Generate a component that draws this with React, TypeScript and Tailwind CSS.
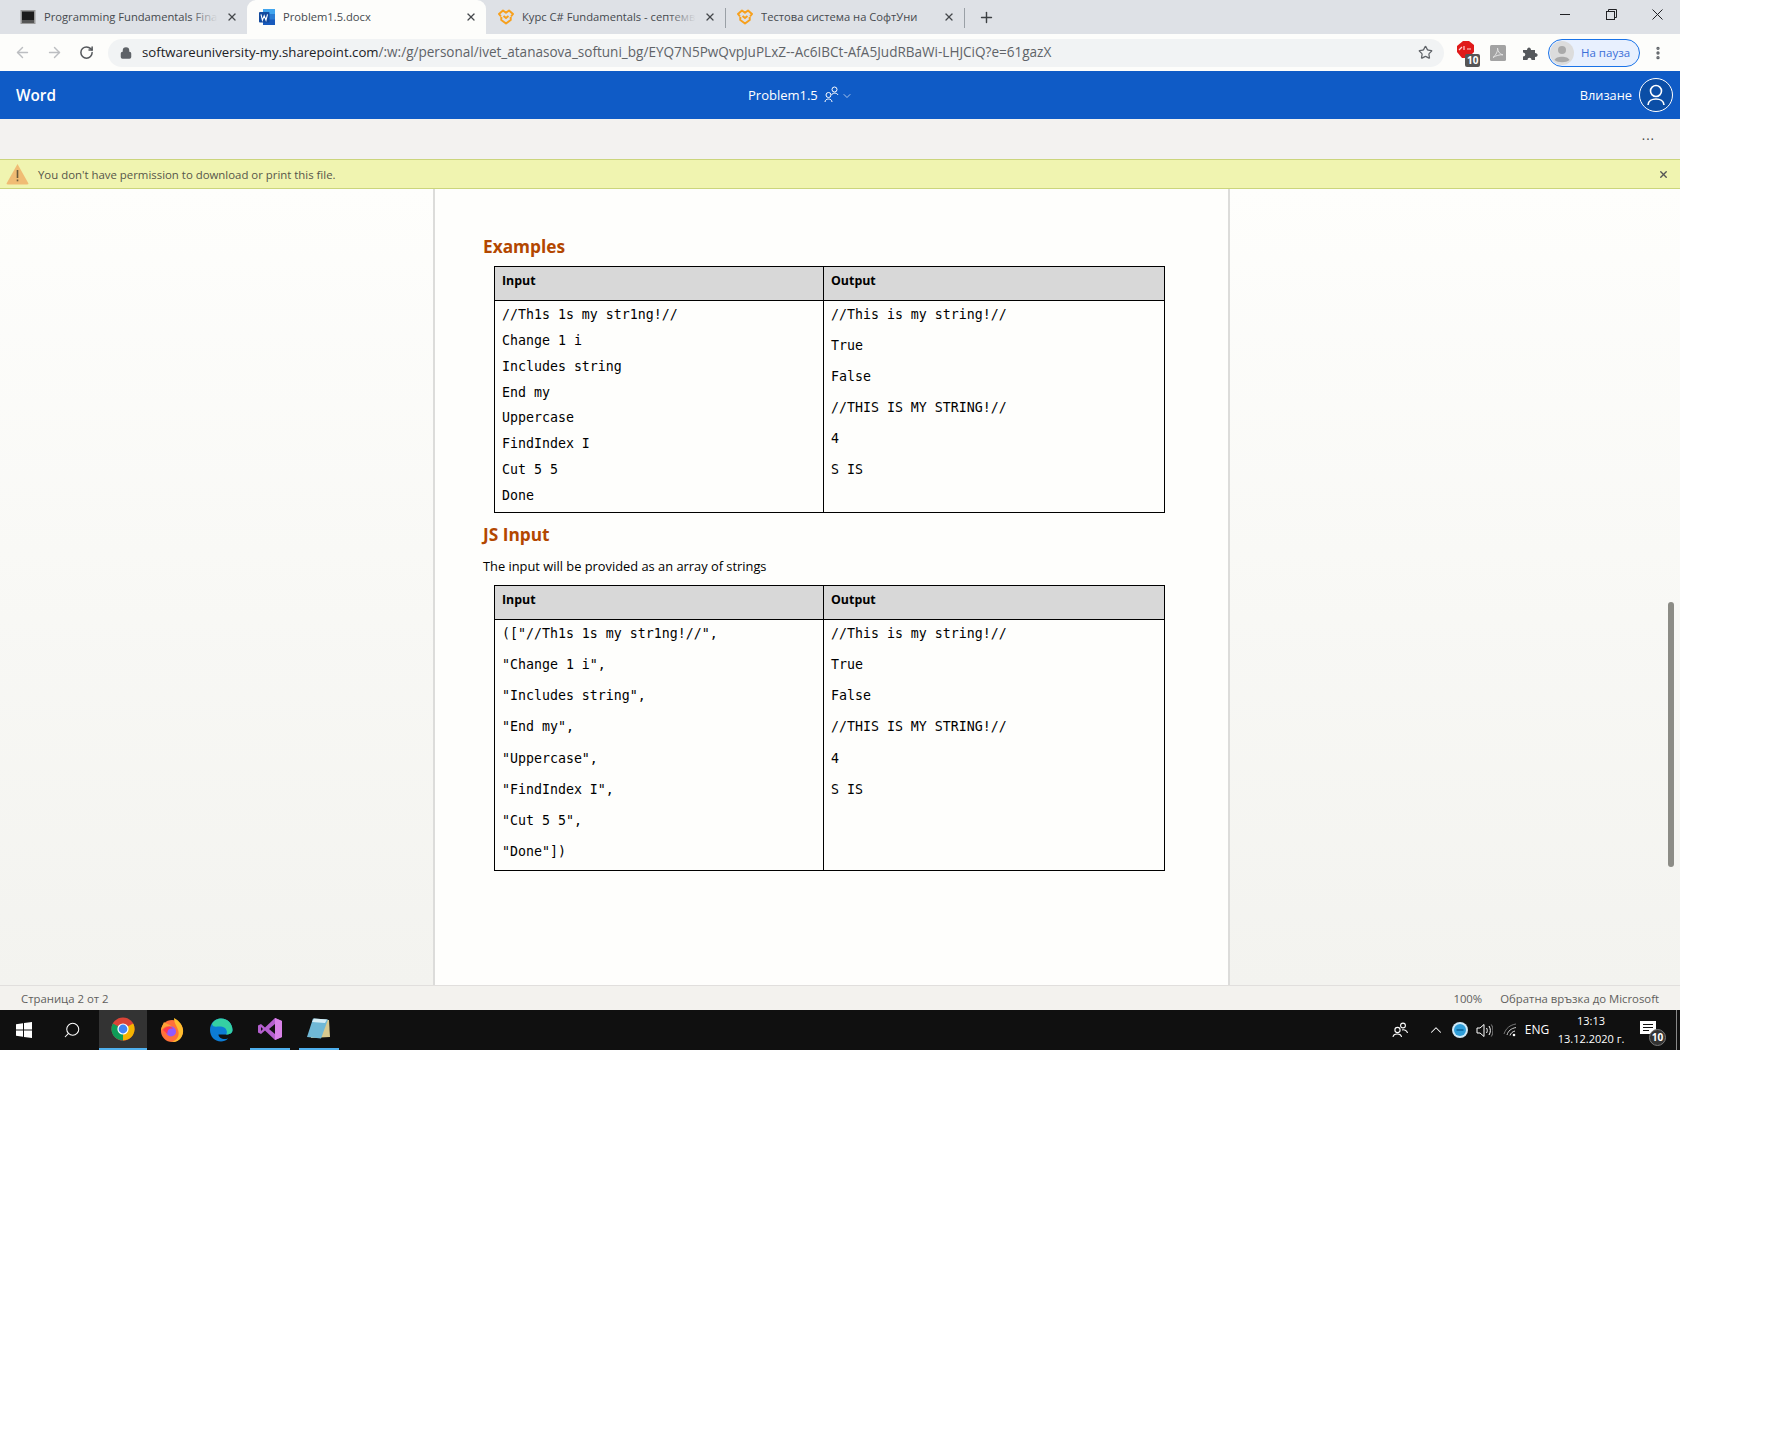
import { ReactNode } from 'react'
import { ArrowLeft, ArrowRight, ChevronDown, ChevronUp, Lock, MoreVertical, Plus, RotateCw, Search, Star, X } from 'lucide-react'

const inputOne = ['//Th1s 1s my str1ng!//', 'Change 1 i', 'Includes string', 'End my', 'Uppercase', 'FindIndex I', 'Cut 5 5', 'Done']
const inputTwo = ['(["//Th1s 1s my str1ng!//",', '"Change 1 i",', '"Includes string",', '"End my",', '"Uppercase",', '"FindIndex I",', '"Cut 5 5",', '"Done"])']
const output = ['//This is my string!//', 'True', 'False', '//THIS IS MY STRING!//', '4', 'S IS']

function SoftUni() {
  return (
    <svg width="16" height="16" viewBox="0 0 16 16" fill="none" stroke="#f7a01d" strokeWidth="2" className="shrink-0">
      <path d="M3 7.5 L1 5 L5 1.5 L8 3.8 L11 1.5 L15 5 L13 7.5" strokeLinejoin="round" />
      <path d="M3.3 8 V11 L8 14.5 L12.7 11 V8" strokeLinejoin="round" />
      <path d="M5.5 7 L8 9 L10.5 7" />
    </svg>
  )
}

function WordIcon() {
  return (
    <svg width="16" height="16" viewBox="0 0 16 16" className="shrink-0">
      <rect x="4" y="0" width="12" height="16" rx="1" fill="#2b7cd3" />
      <rect x="4" y="0" width="12" height="5" fill="#41a5ee" />
      <rect x="4" y="10.5" width="12" height="5.5" fill="#185abd" />
      <rect x="0" y="3" width="10.5" height="10.5" rx="1" fill="#134a9e" />
      <path d="M2 5.3 L3.4 11.2 L5.2 6.8 L7 11.2 L8.5 5.3" stroke="#fff" strokeWidth="1.1" fill="none" />
    </svg>
  )
}

function Tab({ title, icon, width, fade, active, divider }: { title: string; icon: ReactNode; width: string; fade?: boolean; active?: boolean; divider?: boolean }) {
  return (
    <div className={`relative flex h-[34px] shrink-0 items-center pl-3 ${width} ${active ? 'rounded-t-[9px] bg-[#fdfdfb]' : ''}`}>
      {icon}
      <div className="relative ml-2 w-[174px] overflow-hidden whitespace-nowrap text-[11.2px] text-[#45494e]">
        {title}
        {fade && <div className="absolute inset-y-0 right-0 w-7 bg-gradient-to-r from-transparent to-[#dee1e6]" />}
      </div>
      <X size={12} strokeWidth={2.6} className="ml-2 shrink-0 text-[#45484c]" />
      {divider && <div className="absolute right-[-1px] top-[8px] h-[20px] w-px bg-[#9aa0a6]" />}
    </div>
  )
}

function Favicon() {
  return (
    <svg width="16" height="16" viewBox="0 0 16 16" className="shrink-0">
      <rect x="0.5" y="1" width="15" height="14" fill="#9a9a9a" />
      <rect x="2" y="2.5" width="12" height="11" fill="#1c1c1c" />
      <rect x="2" y="11" width="12" height="2.5" fill="#555" />
    </svg>
  )
}

function ChromeBar() {
  return (
    <div className="flex h-[37px] items-center bg-[#fdfdfb]">
      <div className="ml-[6px] flex w-8 justify-center"><ArrowLeft size={17} strokeWidth={2} className="text-[#bcbec1]" /></div>
      <div className="flex w-8 justify-center"><ArrowRight size={17} strokeWidth={2} className="text-[#bcbec1]" /></div>
      <div className="flex w-8 justify-center"><RotateCw size={15} strokeWidth={2.4} className="text-[#55585c]" /></div>
      <div className="ml-[6px] flex h-[28px] w-[1336px] items-center rounded-full bg-[#f1f3f4] pl-3 pr-[11px]">
        <Lock size={12} strokeWidth={3} fill="#5f6368" className="text-[#5f6368]" />
        <div className="ml-[10px] flex-1 whitespace-nowrap pb-[3px] leading-[18px]">
          <span className="text-[13.2px] text-[#202124]">softwareuniversity-my.sharepoint.com</span>
          <span className="text-[13.55px] text-[#5f6368]">/:w:/g/personal/ivet_atanasova_softuni_bg/EYQ7N5PwQvpJuPLxZ--Ac6IBCt-AfA5JudRBaWi-LHJCiQ?e=61gazX</span>
        </div>
        <Star size={15} strokeWidth={2} className="text-[#5f6368]" />
      </div>
      <div className="relative ml-[6px] flex h-[28px] w-8 items-center justify-center">
        <svg width="17" height="17" viewBox="0 0 17 17" className="-translate-x-[1px] -translate-y-[3px]">
          <path d="M6 0 H12 L17 4 V11 L11 17 H5 L0 11 V5 Z" fill="#e01a1a" />
          <path d="M2 9 L5 6 M7 9 V5 M10 8 H14" stroke="#ffd6d6" strokeWidth="1.2" />
        </svg>
        <span className="absolute bottom-0 left-[15px] rounded-[2px] bg-[#555] px-[2px] text-[10px] font-bold leading-[13px] text-white">10</span>
      </div>
      <div className="flex w-8 justify-center">
        <svg width="16" height="16" viewBox="0 0 16 16"><rect width="16" height="16" rx="1.5" fill="#a3a3a3" /><path d="M3 12.5 C6 10 8 6 7.5 3 C8 7 10 9.5 13 9.8 C9.5 9.6 6 10.5 3 12.5 Z" fill="none" stroke="#e4e4e4" strokeWidth="1" /></svg>
      </div>
      <div className="flex w-8 justify-center">
        <svg width="16" height="16" viewBox="0 0 16 16"><path d="M1 5 H5 C5 1.5 9 1.5 9 5 H13 V8 C16.5 8 16.5 12 13 12 V15 H9.5 C9.5 12 5.5 12 5.5 15 H1 V11.5 C4 11.5 4 7.5 1 7.5 Z" fill="#55585c" /></svg>
      </div>
      <div className="ml-[2px] flex h-[28px] w-[92px] items-center rounded-full border border-[#1a73e8] bg-[#e8f0fe] pl-[1px]">
        <svg width="24" height="24" viewBox="0 0 24 24" className="shrink-0"><circle cx="12" cy="12" r="12" fill="#dcdcdc" /><circle cx="12" cy="9" r="4" fill="#a9a9a9" /><path d="M4.5 19 C6 14.5 18 14.5 19.5 19 C16 22 8 22 4.5 19 Z" fill="#a9a9a9" /></svg>
        <span className="ml-[7px] whitespace-nowrap text-[11.5px] text-[#3b6fd8]">На пауза</span>
      </div>
      <div className="ml-[2px] flex w-8 justify-center"><MoreVertical size={16} strokeWidth={3} className="text-[#5f6368]" /></div>
    </div>
  )
}

function TabStrip() {
  return (
    <div className="flex h-[34px] items-center bg-[#dee1e6] pl-2">
      <Tab title="Programming Fundamentals Final" icon={<Favicon />} width="w-[239px]" fade />
      <Tab title="Problem1.5.docx" icon={<WordIcon />} width="w-[239px]" active />
      <Tab title="Курс C# Fundamentals - септември" icon={<SoftUni />} width="w-[239px]" fade divider />
      <Tab title="Тестова система на СофтУни" icon={<SoftUni />} width="w-[239px]" divider />
      <Plus size={17} strokeWidth={2} className="ml-[14px] text-[#3c4043]" />
      <div className="ml-auto flex items-center pb-[6px] text-[#202124]">
        <div className="flex w-[46px] justify-center"><div className="h-px w-[10px] bg-[#202124]" /></div>
        <div className="flex w-[46px] justify-center">
          <svg width="11" height="11" viewBox="0 0 11 11" fill="none" stroke="#202124"><rect x="0.5" y="2.5" width="8" height="8" /><path d="M2.5 2.5 V0.5 H10.5 V8.5 H8.5" /></svg>
        </div>
        <div className="flex w-[46px] justify-center"><svg width="11" height="11" viewBox="0 0 11 11" stroke="#202124"><path d="M0.5 0.5 L10.5 10.5 M10.5 0.5 L0.5 10.5" /></svg></div>
      </div>
    </div>
  )
}

function ExampleTable({ input, inputLeading, outputLeading, inputShift, outputShift, bodyHeight }: { input: string[]; inputLeading: string; outputLeading: string; inputShift: string; outputShift: string; bodyHeight: string }) {
  return (
    <table className="ml-[11px] w-[671px] table-fixed border-collapse border border-black text-left text-black">
      <colgroup>
        <col className="w-[329px]" />
        <col />
      </colgroup>
      <thead>
        <tr className="h-[34px] bg-[#d8d8d8] text-[12.4px] font-bold">
          <th className="border border-black px-[7px] pb-[4px] pt-[5px] align-top leading-[18px]">Input</th>
          <th className="border border-black px-[7px] pb-[4px] pt-[5px] align-top leading-[18px]">Output</th>
        </tr>
      </thead>
      <tbody className="font-['DejaVu_Sans_Mono',monospace] text-[13.28px]">
        <tr className={bodyHeight}>
          <td className="border border-black px-[7px] align-top">
            <div className={`${inputShift} ${inputLeading}`}>
              {input.map((line) => <div key={line} className="whitespace-pre">{line}</div>)}
            </div>
          </td>
          <td className="border border-black px-[7px] align-top">
            <div className={`${outputShift} ${outputLeading}`}>
              {output.map((line) => <div key={line} className="whitespace-pre">{line}</div>)}
            </div>
          </td>
        </tr>
      </tbody>
    </table>
  )
}

function Document() {
  return (
    <div className="h-full w-[797px] shrink-0 border-x-2 border-[#dcdcda] bg-[#fefefc] pl-[48px] pt-[46px]">
      <h2 className="h-6 text-[17.3px] font-bold leading-[23px] text-[#b34700]">Examples</h2>
      <div className="mt-[7px]">
        <ExampleTable input={inputOne} inputLeading="leading-[25.85px]" outputLeading="leading-[31px]" inputShift="pt-px" outputShift="-mt-[2px]" bodyHeight="h-[212px]" />
      </div>
      <h2 className="mt-[10px] h-6 text-[17.3px] font-bold leading-6 text-[#b34700]">JS Input</h2>
      <p className="mt-[9px] h-5 text-[12.85px] leading-5 text-black">The input will be provided as an array of strings</p>
      <div className="mt-[9px]">
        <ExampleTable input={inputTwo} inputLeading="leading-[31.15px]" outputLeading="leading-[31.15px]" inputShift="-mt-[2px]" outputShift="-mt-[2px]" bodyHeight="h-[251px]" />
      </div>
    </div>
  )
}

function Taskbar() {
  return (
    <div className="flex h-10 items-center bg-[#101010]">
      <div className="flex h-full w-12 items-center justify-center">
        <svg width="16" height="16" viewBox="0 0 16 16" fill="#fff"><path d="M0 2.3 L7 1.3 V7.5 H0 Z M8 1.1 L16 0 V7.5 H8 Z M0 8.5 H7 V14.7 L0 13.7 Z M8 8.5 H16 V16 L8 14.9 Z" /></svg>
      </div>
      <div className="flex h-full w-[51px] items-center justify-center pr-[4px]"><Search size={18} strokeWidth={1.4} className="-scale-x-100 text-white" /></div>
      <div className="flex h-full w-12 items-center justify-center border-b-2 border-[#4fb0ee] bg-[#333]">
        <svg width="24" height="24" viewBox="0 0 24 24">
          <circle cx="12" cy="12" r="11.5" fill="#db4437" />
          <path d="M12 12 L22.2 6.5 A11.5 11.5 0 0 1 12 23.5 Z" fill="#f4b400" />
          <path d="M12 12 L12 23.5 A11.5 11.5 0 0 1 1.8 6.5 Z" fill="#0f9d58" />
          <circle cx="12" cy="12" r="5.6" fill="#fff" />
          <circle cx="12" cy="12" r="4.4" fill="#4285f4" />
        </svg>
      </div>
      <div className="flex h-full w-[49px] items-center justify-center">
        <svg width="24" height="24" viewBox="0 0 24 24">
          <circle cx="12" cy="13" r="11" fill="#ff7139" />
          <path d="M14 0 C22 4 25 12 22 18 C20 22 17 24 12 24 C17 22 20 18 18 12 C17 8 14 5 14 0 Z" fill="#ffbd2e" />
          <path d="M4 4 C3 7 1 9 1 13 C4 8 9 7 12 9 C10 6 6 6 4 4 Z" fill="#ffa436" />
          <circle cx="11" cy="13.5" r="5" fill="#9059ff" />
          <path d="M3 12 C6 8 11 8 13 10.5 C9 10 7 12 7.5 16 Z" fill="#ff3750" />
        </svg>
      </div>
      <div className="flex h-full w-[49px] items-center justify-center">
        <svg width="24" height="24" viewBox="0 0 24 24">
          <path d="M1 12 C1 5 6 0.5 12 0.5 C19 0.5 23.5 6 23.5 12 C23.5 15 21 16.5 17 16.5 H9.5 C9.5 19 12 21 16 21 C17.5 21 18.5 20.5 19 20.5 C17 22.8 14.5 23.5 12 23.5 C5.5 23.5 1 18.5 1 12 Z" fill="#0c7cd5" />
          <path d="M3 6 C5 2 9 0.5 12 0.5 C19 0.5 23.5 6 23.5 12 C23.5 15 21 16.5 17 16.5 C19 15 18 9 12 8.5 C8 8.2 4 10 3 6 Z" fill="#35d0a3" />
        </svg>
      </div>
      <div className="ml-[5px] flex h-full w-10 items-center justify-center border-b-2 border-[#4fb0ee]">
        <svg width="24" height="24" viewBox="0 0 24 24">
          <path d="M17 1 L24 4 V20 L17 23 L7 13.5 L3 17 L0 15.5 V8.5 L3 7 L7 10.5 Z" fill="#b55fcf" />
          <path d="M3 10 V14 L5 12 Z" fill="#101010" />
          <path d="M17 1 L24 4 V20 L17 23 Z" fill="#d982e8" />
          <path d="M17 7 L11 12 L17 17 Z" fill="#101010" />
        </svg>
      </div>
      <div className="ml-[9px] flex h-full w-10 items-center justify-center border-b-2 border-[#4fb0ee]">
        <svg width="24" height="24" viewBox="0 0 24 24">
          <path d="M6 2 L22 3 L23 20 L4 21 Z" fill="#d7c98f" />
          <path d="M6 1.5 L21 2.5 L14 21.5 L0 20 Z" fill="#6fb8d6" />
          <path d="M7 1.5 L20 2.5 L18 6 L5 5 Z" fill="#d5edf5" />
        </svg>
      </div>

      <div className="ml-auto flex h-full w-[296px] items-center text-white">
        <div className="flex w-8 justify-center">
          <svg width="16" height="16" viewBox="0 0 16 16" fill="none" stroke="#fff" strokeWidth="1.1"><circle cx="5.5" cy="8" r="2.6" /><path d="M1 15 C1.5 11 9 11 9.5 15" /><circle cx="11" cy="3.5" r="2.4" /><path d="M10 8 C12 7.5 15 8 15.5 11" /></svg>
        </div>
        <div className="ml-2 flex w-6 justify-center"><ChevronUp size={18} strokeWidth={1.4} /></div>
        <div className="flex w-6 justify-center">
          <svg width="16" height="16" viewBox="0 0 16 16"><circle cx="8" cy="8" r="8" fill="#cfe9f7" /><circle cx="8" cy="8" r="6" fill="#2f9ed9" /><rect x="4.5" y="7" width="7" height="2" fill="#0f6ea8" /></svg>
        </div>
        <div className="flex w-6 justify-center">
          <svg width="17" height="15" viewBox="0 0 17 15" fill="none" stroke="#fff" strokeWidth="1"><path d="M1 5 H4 L8 1.5 V13.5 L4 10 H1 Z" /><path d="M10.5 5 C11.5 6.5 11.5 8.5 10.5 10" /><path d="M13 3 C14.8 5.5 14.8 9.5 13 12" /><path d="M15.3 1.5 C17.5 5 17.5 10 15.3 13.5" stroke="#888" /></svg>
        </div>
        <div className="ml-[2px] flex w-6 justify-center">
          <svg width="14" height="14" viewBox="0 0 14 14" fill="none" stroke="#777" strokeWidth="1"><path d="M1 11 C3 5 7 2 13 1" /><path d="M4 12 C5 8 8 5.5 13 4.5" stroke="#ccc" /><path d="M7 12.5 C7.5 10.5 9.5 8.5 12 8" stroke="#ddd" /><circle cx="11" cy="12" r="1.3" fill="#fff" stroke="none" /></svg>
        </div>
        <div className="w-[30px] text-center text-[12px]">ENG</div>
        <div className="w-[78px] text-center text-[11px] leading-[18px]">
          <div>13:13</div>
          <div className="whitespace-nowrap">13.12.2020 г.</div>
        </div>
        <div className="relative flex w-10 justify-center">
          <svg width="16" height="13" viewBox="0 0 16 13" className="-translate-x-[2px] -translate-y-[3px]"><path d="M0 0 H16 V13 H0 Z" fill="#fff" /><path d="M3 3.5 H13 M3 6.5 H13 M3 9.5 H9" stroke="#101010" /></svg>
          <span className="absolute bottom-[-9px] left-[19px] flex h-[17px] w-[17px] items-center justify-center rounded-full border border-[#777] bg-[#333] text-[10px] font-bold">10</span>
        </div>
        <div className="ml-[6px] h-full w-px bg-[#888]" />
      </div>
    </div>
  )
}

export default function App() {
  return (
    <div className="h-[1448px] w-[1784px] bg-white font-['Open_Sans',sans-serif]">
      <div className="flex h-[1050px] w-[1680px] flex-col">
        <TabStrip />
        <ChromeBar />

        <div className="flex h-12 items-center bg-[#0f5bc6] text-white">
          <div className="w-[733px] pl-4 text-[15.3px] font-semibold">Word</div>
          <div className="flex items-center pt-px text-[13px]">
            <span className="w-[91px] whitespace-nowrap pl-[15px]">Problem1.5</span>
            <svg width="17" height="17" viewBox="0 0 17 17" fill="none" stroke="#fff" strokeWidth="1" className="-translate-y-[1px]"><circle cx="4.5" cy="9" r="2.5" /><path d="M1 16 C1 12 8 12 8 16" /><circle cx="10.5" cy="3.5" r="2.5" /><path d="M7.5 9 C8.5 6.5 13 6.5 14 9" /></svg>
            <ChevronDown size={12} strokeWidth={1.3} />
          </div>
          <span className="ml-auto whitespace-nowrap pt-px text-[12.8px]">Влизане</span>
          <div className="ml-[7px] mr-[7px] flex h-[34px] w-[34px] items-center justify-center rounded-full border border-white bg-[#0b4ea6]">
            <svg width="20" height="24" viewBox="0 0 20 24" fill="none" stroke="#fff" strokeWidth="1.6"><circle cx="10" cy="8" r="5.5" /><path d="M2 22 C2.5 14 17.5 14 18 22" /></svg>
          </div>
        </div>

        <div className="flex h-[40px] items-start justify-end bg-[#f3f2f0] pr-[25px] pt-[7px] text-[13px] tracking-[1px] text-[#444]">...</div>

        <div className="flex h-[30px] items-center border-y border-[#cbd57c] bg-[#f0f4b0] pl-[6px] pr-[11px]">
          <svg width="23" height="22" viewBox="0 0 23 22"><path d="M11.5 1 L22.5 20.5 Q22.5 21.5 21 21.5 H2 Q0.5 21.5 0.5 20.5 Z" fill="#f0bc74" /><rect x="10.7" y="7" width="1.6" height="8" fill="#6a5a3a" /><rect x="10.7" y="16.5" width="1.6" height="1.8" fill="#6a5a3a" /></svg>
          <span className="ml-[9px] pt-px text-[11.4px] text-[#56564a]">You don't have permission to download or print this file.</span>
          <X size={11} strokeWidth={3} className="ml-auto text-[#555]" />
        </div>

        <div className="relative flex h-[796px]">
          <div className="h-full w-[433px] shrink-0 bg-gradient-to-b from-[#fefefc] to-[#f3f3ef]" />
          <Document />
          <div className="h-full flex-1 bg-gradient-to-b from-[#fefefc] to-[#f3f3ef]" />
          <div className="absolute right-[6px] top-[413px] h-[265px] w-[6px] rounded-full bg-[#8c8c86]" />
        </div>

        <div className="flex h-[25px] items-center border-t border-[#e1dfdd] bg-[#f3f2ee] pl-[21px] pr-[21px] pt-px text-[11.35px] text-[#605e5c]">
          <span>Страница 2 от 2</span>
          <span className="ml-auto">100%</span>
          <span className="ml-[18px]">Обратна връзка до Microsoft</span>
        </div>

        <Taskbar />
      </div>
    </div>
  )
}
